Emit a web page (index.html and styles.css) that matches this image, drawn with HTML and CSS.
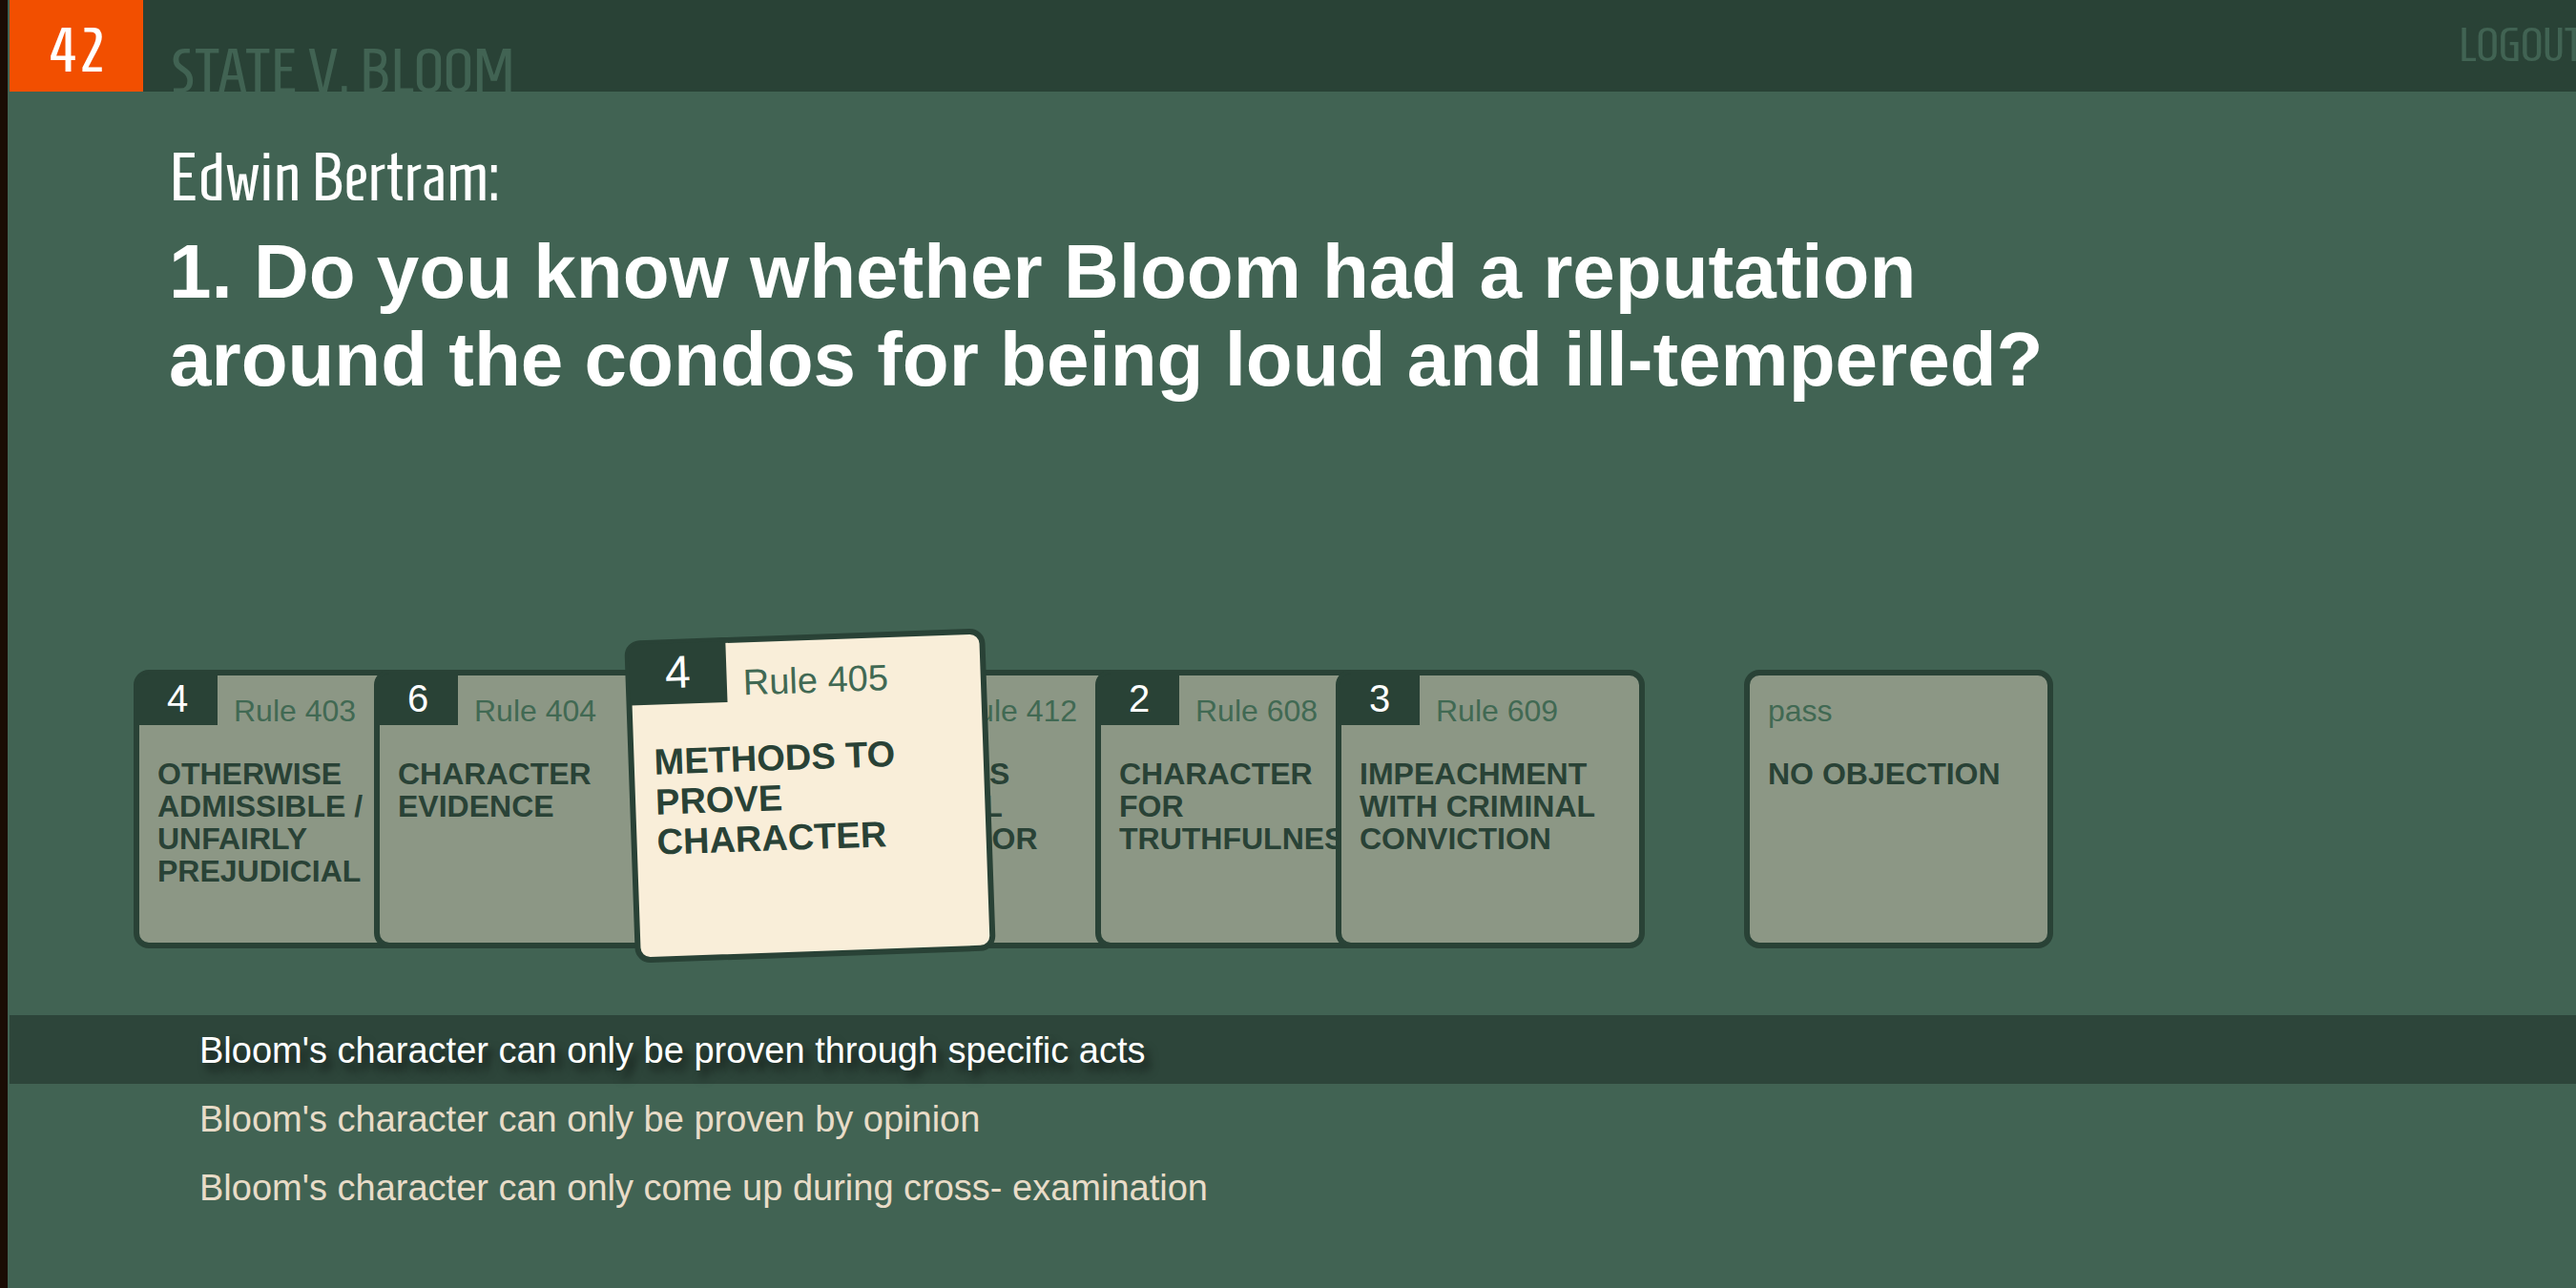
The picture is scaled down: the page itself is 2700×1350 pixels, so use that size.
FILE: index.html
```html
<!DOCTYPE html>
<html lang="en">
<head>
<meta charset="utf-8">
<title>State v. Bloom</title>
<link rel="stylesheet" href="styles.css">
</head>
<body>
<div class="game">
  <header class="topbar">
    <div class="timer">42</div>
    <div class="case-title">STATE V. BLOOM</div>
    <a class="logout" href="#">LOGOUT</a>
  </header>
  <main>
    <section class="question">
      <p class="witness">Edwin Bertram:</p>
      <h1 class="prompt">1. Do you know whether Bloom had a reputation around the condos for being loud and ill-tempered?</h1>
    </section>
    <section class="hand">
      <button class="card" type="button">
        <span class="card-head"><span class="points">4</span><span class="rule">Rule 403</span></span>
        <span class="card-name">OTHERWISE ADMISSIBLE / UNFAIRLY PREJUDICIAL</span>
      </button>
      <button class="card" type="button">
        <span class="card-head"><span class="points">6</span><span class="rule">Rule 404</span></span>
        <span class="card-name">CHARACTER EVIDENCE</span>
      </button>
      <button class="card selected" type="button">
        <span class="card-head"><span class="points">4</span><span class="rule">Rule 405</span></span>
        <span class="card-name">METHODS TO PROVE CHARACTER</span>
      </button>
      <button class="card" type="button">
        <span class="card-head"><span class="points"></span><span class="rule">Rule 412</span></span>
        <span class="card-name">VICTIM'S SEXUAL BEHAVIOR</span>
      </button>
      <button class="card" type="button">
        <span class="card-head"><span class="points">2</span><span class="rule">Rule 608</span></span>
        <span class="card-name">CHARACTER FOR TRUTHFULNESS</span>
      </button>
      <button class="card last" type="button">
        <span class="card-head"><span class="points">3</span><span class="rule">Rule 609</span></span>
        <span class="card-name">IMPEACHMENT WITH CRIMINAL CONVICTION</span>
      </button>
      <button class="card pass" type="button">
        <span class="card-head"><span class="rule">pass</span></span>
        <span class="card-name">NO OBJECTION</span>
      </button>
    </section>
    <section class="options">
      <button class="option active" type="button">Bloom's character can only be proven through specific acts</button>
      <button class="option" type="button">Bloom's character can only be proven by opinion</button>
      <button class="option" type="button">Bloom's character can only come up during cross- examination</button>
    </section>
  </main>
</div>
</body>
</html>
```
FILE: styles.css
```css
* { box-sizing: border-box; }

:root {
  --green: #416353;
  --dark: #294236;
  --card: #8c9785;
  --cream: #f9eed9;
  --display: "Homenaje", "Roboto Condensed", "Open Sans Condensed", "Noto Sans Condensed", "Liberation Sans", sans-serif;
}

body {
  margin: 0;
  min-height: 100vh;
  display: flex;
  background: var(--green);
  font-family: "Liberation Sans", Arial, sans-serif;
  overflow-x: hidden;
}

.game {
  flex: 1;
  min-width: 0;
  padding-left: 2px;
  border-left: 8px solid #1a0c04;
}

button {
  font-family: inherit;
  text-align: left;
  cursor: pointer;
}

/* top bar */
.topbar {
  display: flex;
  height: 96px;
  overflow: hidden;
  background: var(--dark);
  font-family: var(--display);
}

.timer {
  width: 140px;
  line-height: 104px;
  font-size: 66px;
  text-align: center;
  color: #fff;
  background: #f24f00;
}

.case-title {
  padding: 38px 0 0 28px;
  font-size: 66px;
  line-height: 72px;
  white-space: nowrap;
  color: var(--green);
}

.logout {
  margin: 0 -8px 0 auto;
  font-size: 50px;
  line-height: 94px;
  color: var(--green);
  text-decoration: none;
}

/* question */
.question {
  min-height: 583px;
  padding: 52px 400px 0 167px;
  color: #fff;
}

.witness {
  margin: 0;
  font-family: var(--display);
  font-size: 71px;
  line-height: 76px;
}

.prompt {
  max-width: 2040px;
  margin: 15px 0 0;
  font-size: 80px;
  line-height: 92px;
}

/* cards */
.hand {
  display: flex;
  align-items: center;
  padding-left: 130px;
}

.card {
  flex: none;
  display: flex;
  flex-direction: column;
  justify-content: flex-start;
  width: 324px;
  height: 292px;
  margin: 0 -72px 0 0;
  padding: 0;
  border: 6px solid var(--dark);
  border-radius: 16px;
  background: var(--card);
  color: var(--dark);
  font-size: 32px;
}

.card-head {
  display: flex;
  height: 86px;
}

/* the badge overlaps the card border so that the two read as one shape */
.points {
  width: 84px;
  height: 54px;
  margin: -2px 0 0 -2px;
  border-top-left-radius: 12px;
  background: var(--dark);
  color: #fff;
  font-size: 40px;
  line-height: 52px;
  text-align: center;
}

.rule {
  padding-left: 17px;
  line-height: 74px;
  color: #416953;
}

.card-name {
  padding: 0 19px;
  font-weight: bold;
  line-height: 34px;
}

.card.last { margin-right: 104px; }
.card.pass { margin-right: 0; }
.pass .rule { padding-left: 19px; }

.card.selected {
  z-index: 1;
  width: 378px;
  height: 338px;
  margin: 0 -142px 0 16px;
  background: var(--cream);
  font-size: 38px;
  transform: translateY(-14px) rotate(-2deg);
}

.selected .card-head { height: 101px; }

.selected .points {
  width: 102px;
  height: 64px;
  font-size: 48px;
  line-height: 62px;
}

.selected .rule { line-height: 84px; }

.selected .card-name {
  padding: 0 21px;
  line-height: 42px;
}

/* answer options */
.options {
  display: flex;
  flex-direction: column;
  padding: 47px 0 70px;
}

.option {
  height: 72px;
  padding: 0 199px;
  border: 0;
  background: none;
  color: #e8dcc8;
  font-size: 38px;
  line-height: 74px;
}

.option.active {
  background: #2d453a;
  color: #fff;
  text-shadow: 6px 8px 10px rgba(0, 0, 0, 0.6);
}
```
